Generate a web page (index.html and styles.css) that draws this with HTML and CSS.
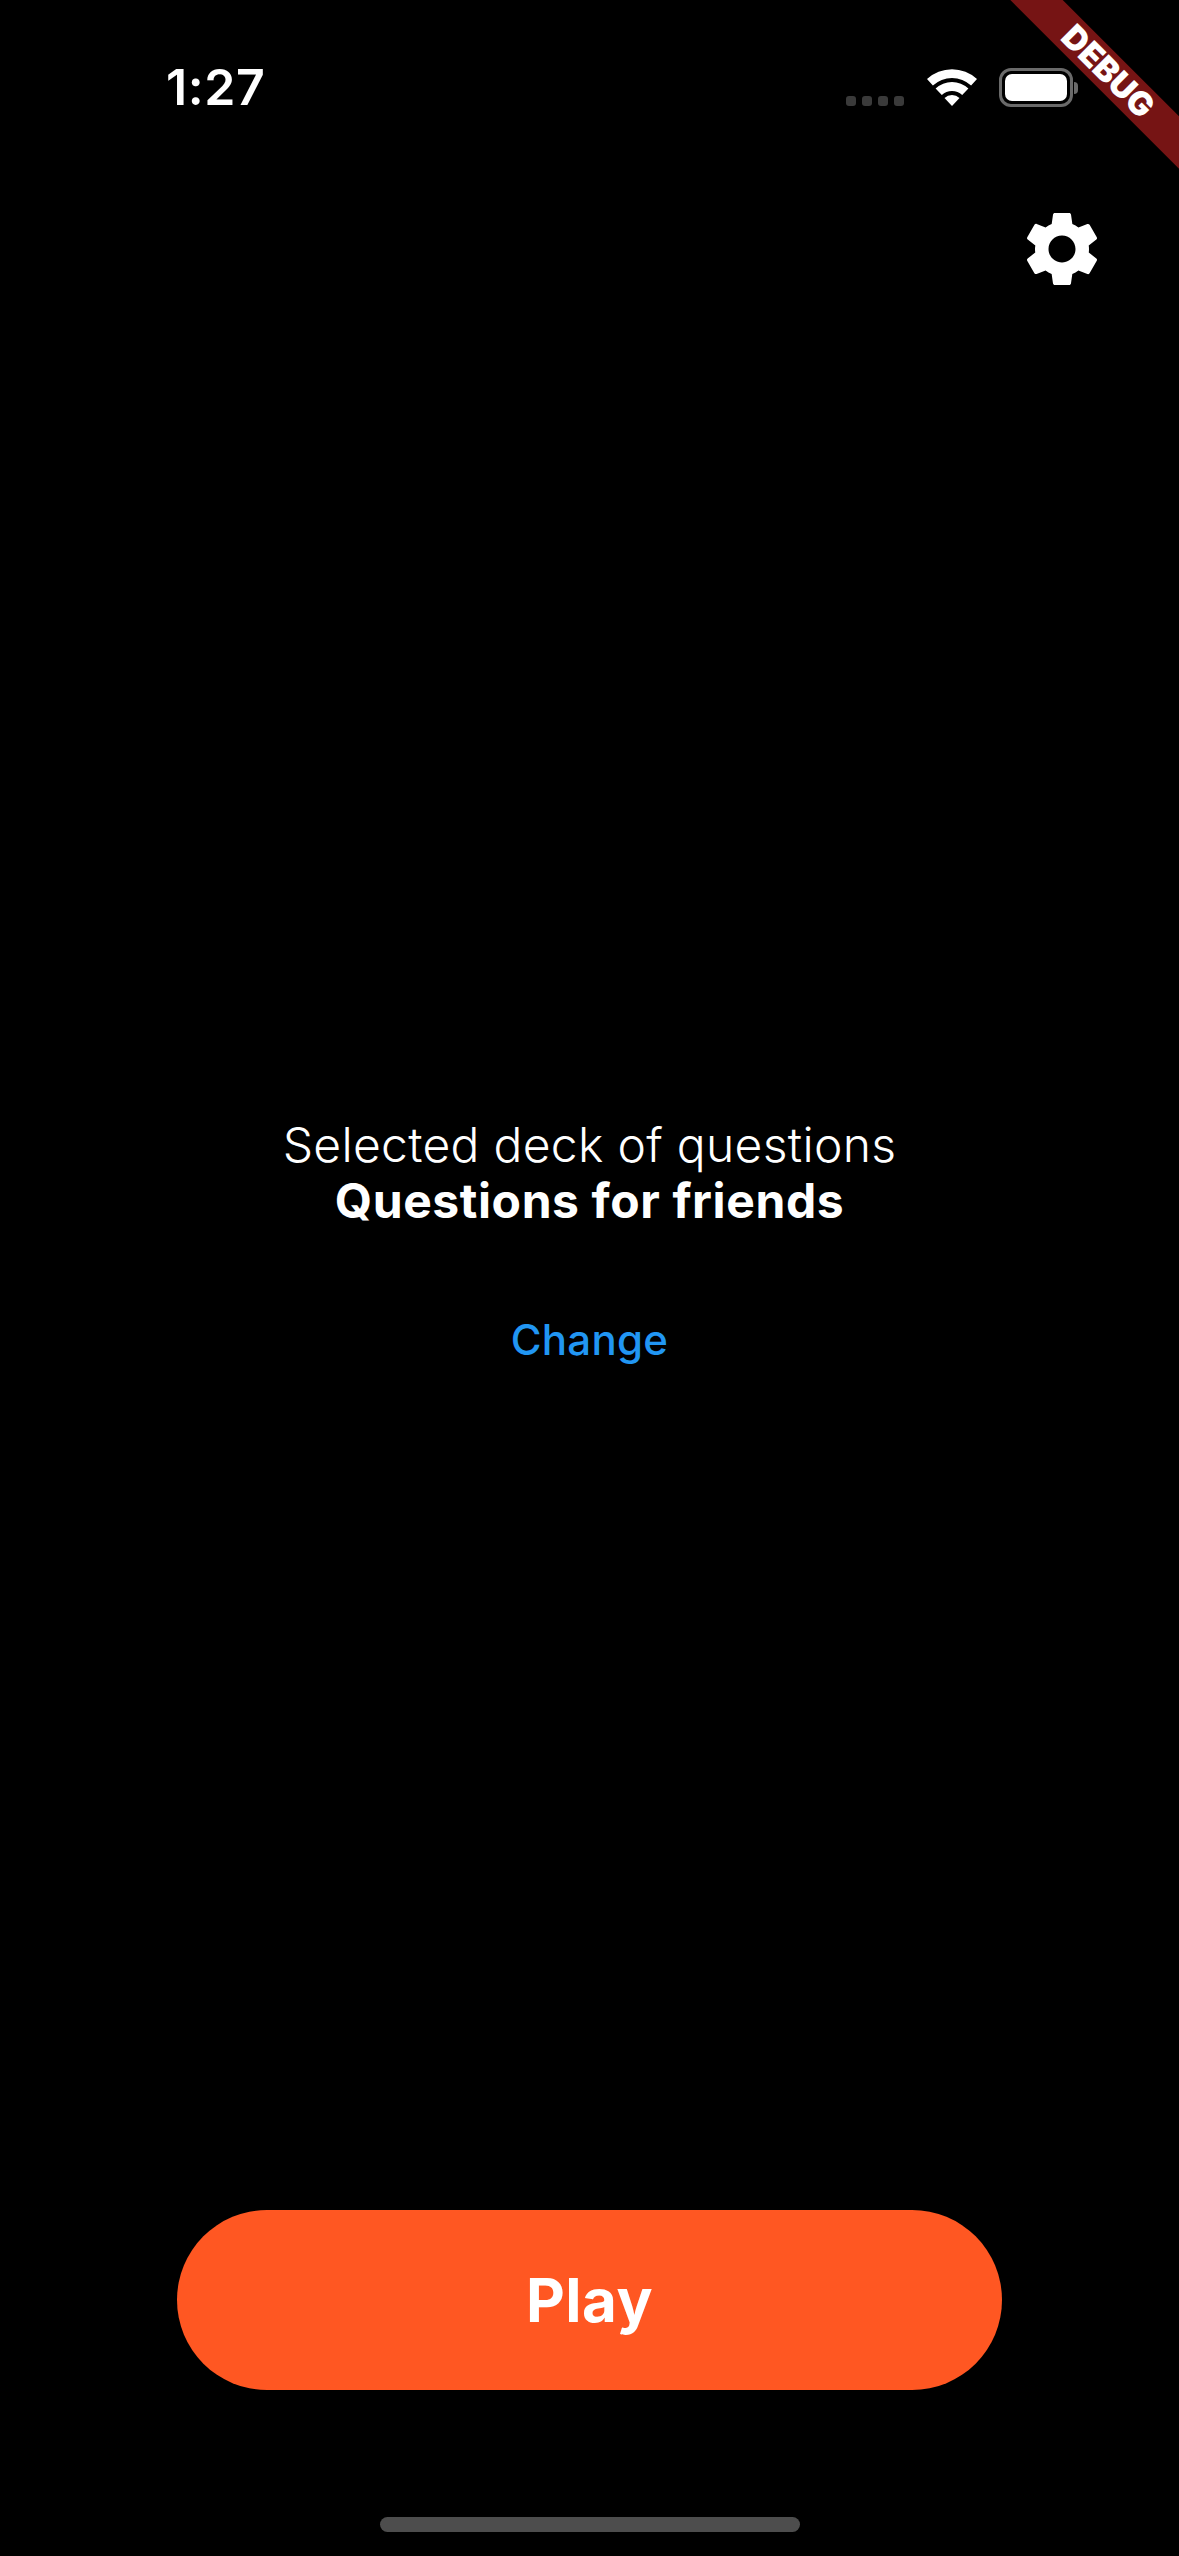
FILE: index.html
```html
<!DOCTYPE html>
<html lang="en">
<head>
<meta charset="utf-8">
<title>Questions</title>
<link rel="stylesheet" href="styles.css">
</head>
<body>
<div class="screen">
  <header class="status">
    <span class="time">1:27</span>
    <div class="indicators">
      <div class="dots"><i></i><i></i><i></i><i></i></div>
      <svg class="wifi" viewBox="0 0 50 37" width="50" height="37">
        <path fill="#fff" d="M0 10A37 37 0 0 1 50 10L44.1 16.5A28 28 0 0 0 5.9 16.5Z"/>
        <path fill="#fff" d="M8.6 19.5A24 24 0 0 1 41.4 19.5L35.2 26A15 15 0 0 0 14.8 26Z"/>
        <path fill="#fff" d="M17.5 29A11 11 0 0 1 32.5 29L25 37Z"/>
      </svg>
      <div class="battery"><div class="battery-body"><div class="battery-fill"></div></div><div class="battery-nub"></div></div>
    </div>
  </header>
  <div class="toolbar">
    <svg class="gear" viewBox="0 0 24 24" width="90" height="90"><path fill="#fff" d="M19.14 12.94c.04-.3.06-.61.06-.94 0-.32-.02-.64-.07-.94l2.03-1.58c.18-.14.23-.41.12-.61l-1.92-3.32c-.12-.22-.37-.29-.59-.22l-2.39.96c-.5-.38-1.03-.7-1.62-.94l-.36-2.54c-.04-.24-.24-.41-.48-.41h-3.84c-.24 0-.43.17-.47.41l-.36 2.54c-.59.24-1.13.57-1.62.94l-2.39-.96c-.22-.08-.47 0-.59.22L2.74 8.87c-.12.21-.08.47.12.61l2.03 1.58c-.05.3-.09.63-.09.94s.02.64.07.94l-2.03 1.58c-.18.14-.23.41-.12.61l1.92 3.32c.12.22.37.29.59.22l2.39-.96c.5.38 1.03.7 1.62.94l.36 2.54c.05.24.24.41.48.41h3.84c.24 0 .44-.17.47-.41l.36-2.54c.59-.24 1.13-.56 1.62-.94l2.39.96c.22.08.47 0 .59-.22l1.92-3.32c.12-.22.07-.47-.12-.61l-2.01-1.58zM12 15.6c-1.98 0-3.6-1.62-3.6-3.6s1.62-3.6 3.6-3.6 3.6 1.62 3.6 3.6-1.62 3.6-3.6 3.6z"/></svg>
  </div>
  <main class="deck">
    <p class="deck-label">Selected deck of questions</p>
    <p class="deck-name">Questions for friends</p>
    <a class="change">Change</a>
  </main>
  <div class="actions"><button class="play">Play</button></div>
  <div class="home-area"><div class="home-bar"></div></div>
  <div class="ribbon">DEBUG</div>
</div>
</body>
</html>
```
FILE: styles.css
```css
html, body { margin: 0; padding: 0; background: #000; }
.screen {
  position: relative;
  width: 1179px;
  height: 2556px;
  overflow: hidden;
  display: flex;
  flex-direction: column;
  background: #000;
  color: #fff;
  font-family: "Inter", "Liberation Sans", sans-serif;
}
.status {
  height: 130px;
  flex: none;
  display: flex;
  justify-content: space-between;
  align-items: flex-start;
  padding: 0 101px 0 166px;
  box-sizing: border-box;
}
.time { margin-top: 57px; font-size: 50px; line-height: 60px; font-weight: 600; letter-spacing: 0.6px; }
.indicators { display: flex; align-items: flex-start; margin-top: 68px; }
.dots { display: flex; gap: 6px; margin: 28px 23px 0 0; }
.dots i { display: block; width: 10px; height: 10px; border-radius: 3px; background: #3a3a3a; }
.wifi { margin: 1px 22px 0 0; }
.battery { display: flex; align-items: center; height: 39px; }
.battery-body {
  width: 74px; height: 39px; box-sizing: border-box;
  border: 3px solid #6a6a6a; border-radius: 12px; padding: 3px;
}
.battery-fill { width: 100%; height: 100%; background: #fff; border-radius: 7px; }
.battery-nub { width: 4px; height: 12px; margin-left: 1px; background: #6a6a6a; border-radius: 0 4px 4px 0; }
.toolbar { flex: none; height: 90px; display: flex; justify-content: flex-end; padding: 74px 72px 0 0; }
.deck { flex: none; height: 1916px; display: flex; flex-direction: column; align-items: center; }
.deck-label { margin: 0; padding-top: 823px; font-size: 48px; line-height: 56px; font-weight: 340; text-align: center; letter-spacing: 0.3px; }
.deck-name { margin: 0; font-size: 48px; line-height: 56px; font-weight: 700; text-align: center; letter-spacing: 0.6px; }
.change { margin-top: 86px; font-size: 42px; line-height: 50px; font-weight: 450; color: #2196f3; letter-spacing: 0.3px; }
.actions { flex: none; display: flex; justify-content: center; }
.play { width: 825px; height: 180px; border: 0; border-radius: 90px; background: #ff5722; color: #fff; font: 700 60px/72px "Inter", "Liberation Sans", sans-serif; letter-spacing: 0.5px; }
.home-area { flex: none; display: flex; justify-content: center; padding-top: 127px; }
.home-bar { width: 420px; height: 15px; border-radius: 8px; background: #4d4d4d; }
.ribbon {
  position: absolute;
  left: 907px; top: 52px;
  width: 400px; height: 37px;
  padding-left: 3px;
  box-sizing: border-box;
  transform: rotate(45deg);
  background: #761414;
  color: #fff;
  font-size: 33px; line-height: 37px; font-weight: 900;
  text-align: center;
}
```
